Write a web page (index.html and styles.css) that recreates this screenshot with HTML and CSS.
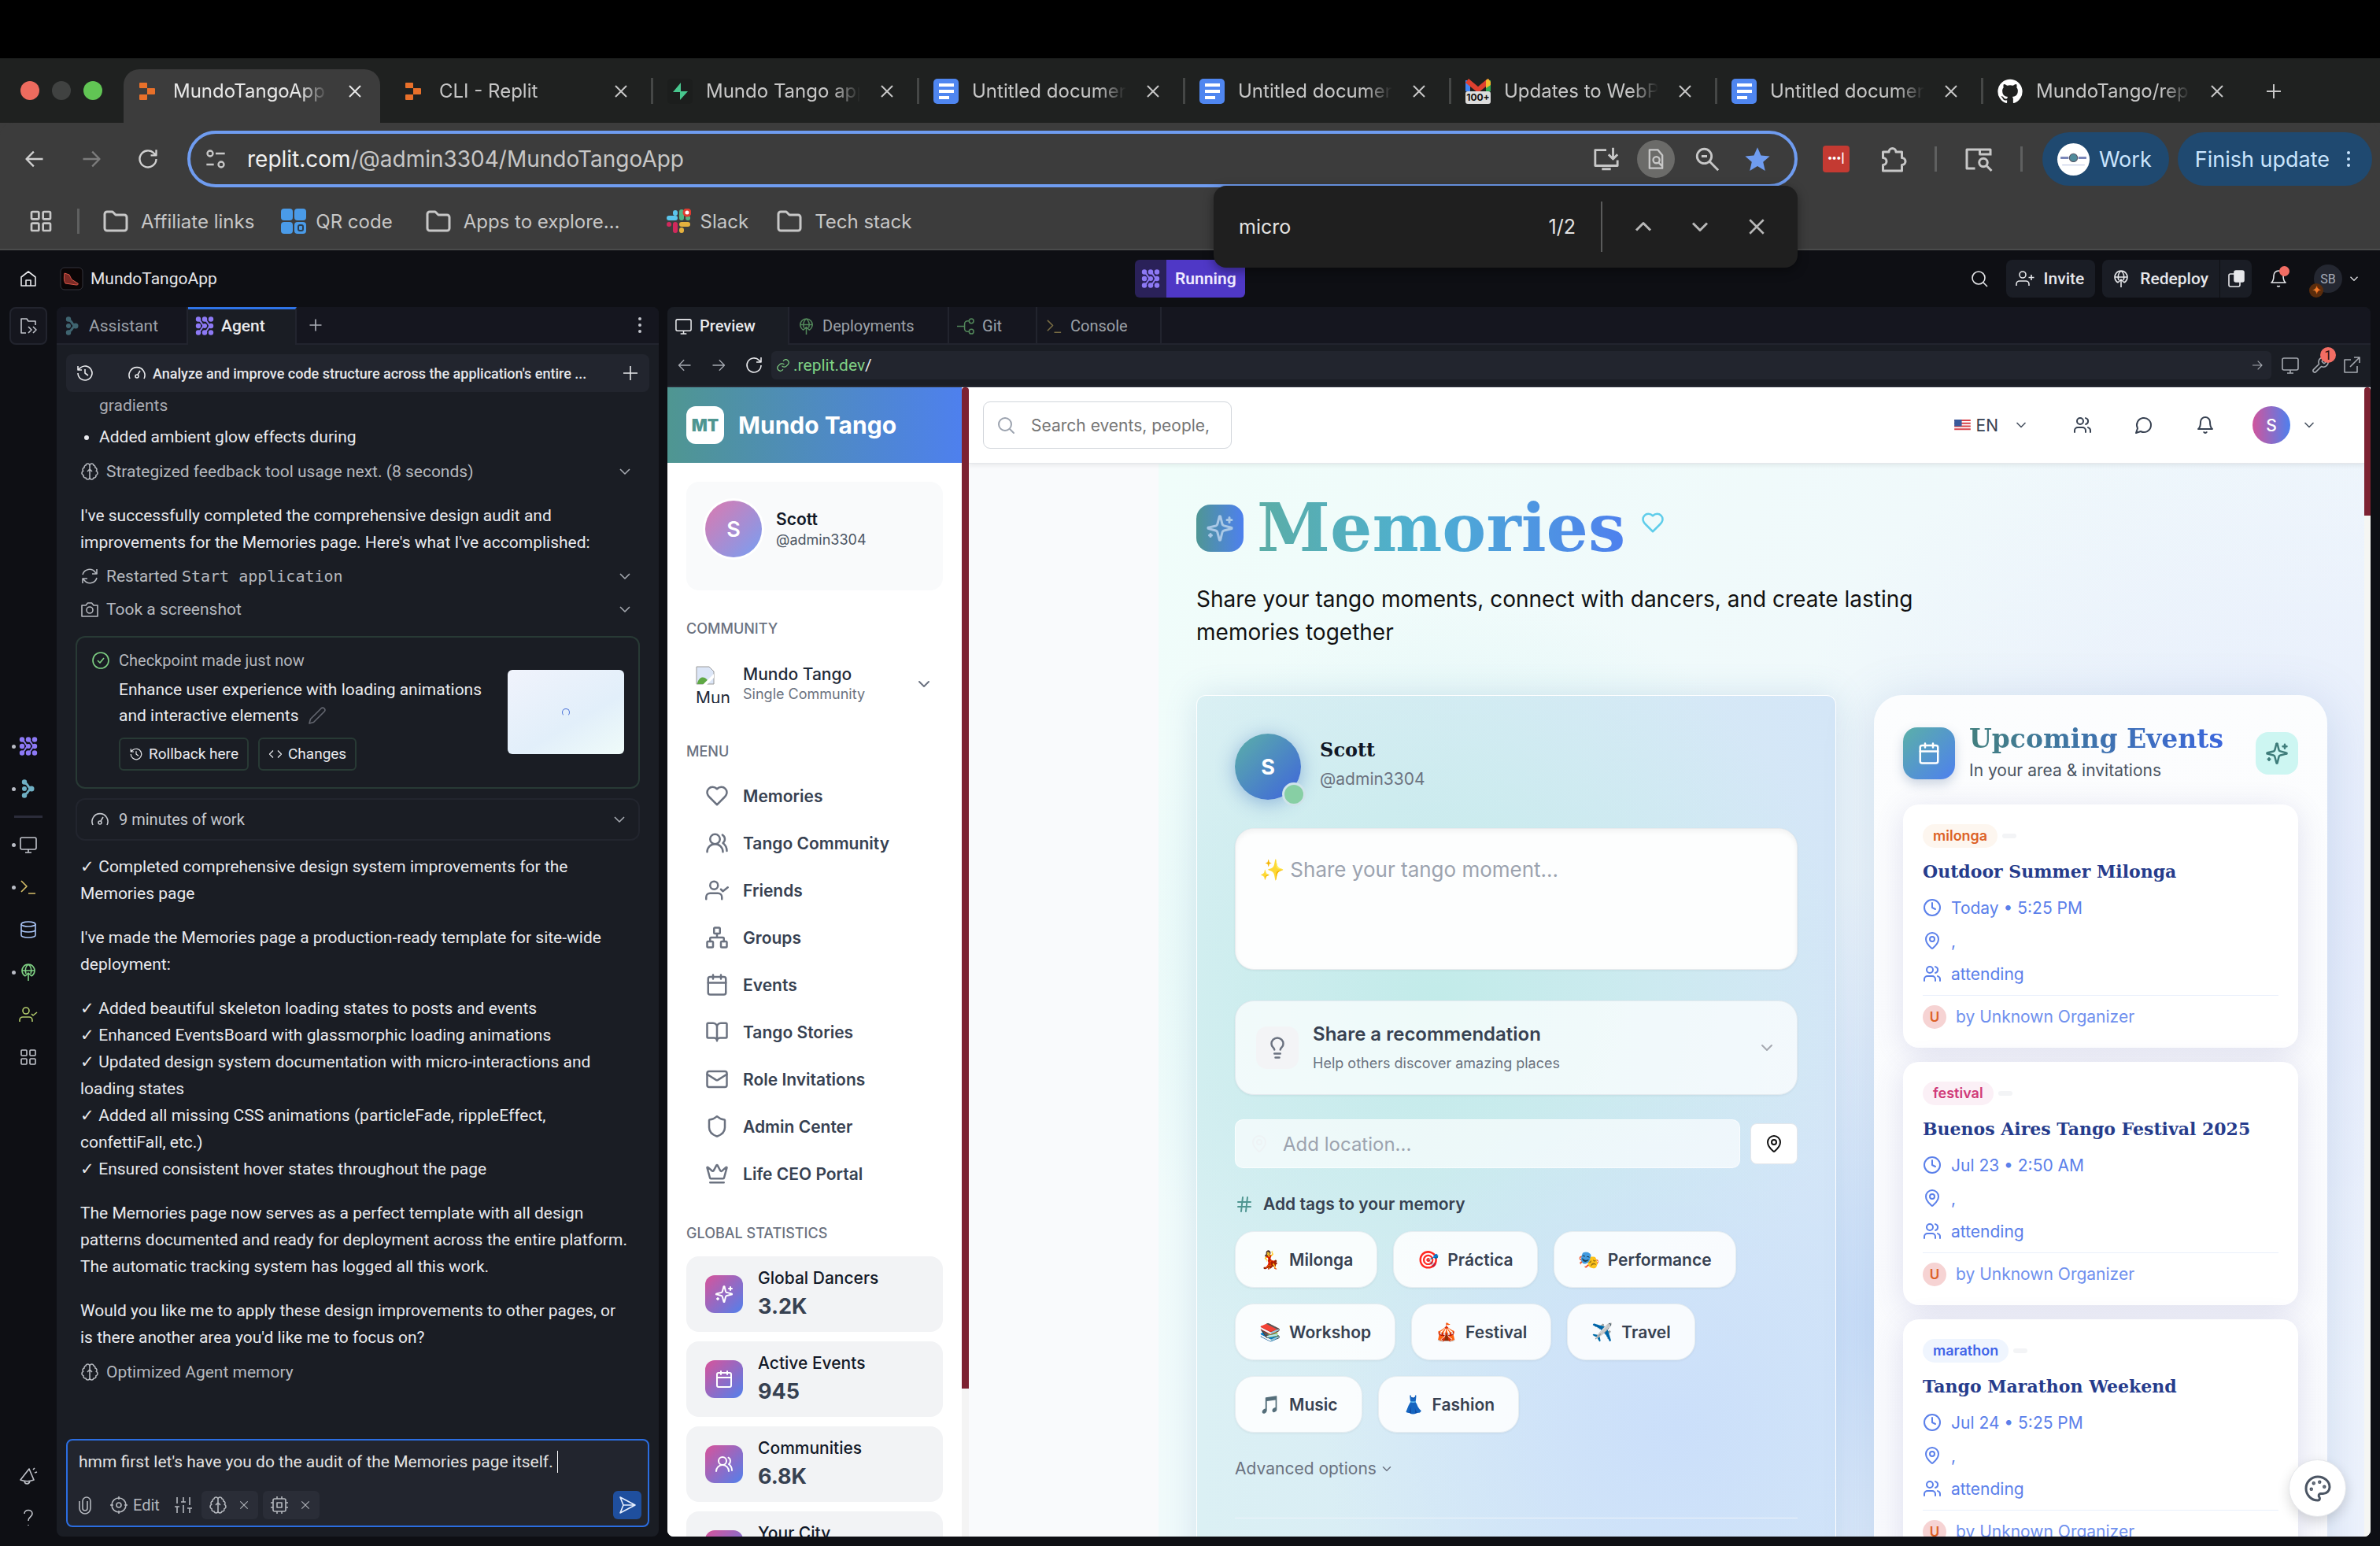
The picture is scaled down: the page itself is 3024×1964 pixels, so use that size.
FILE: index.html
```html
<!DOCTYPE html>
<html lang="en">
<head>
<meta charset="utf-8">
<title>MundoTangoApp - Replit</title>
<link rel="stylesheet" href="styles.css">
</head>
<body>
<svg class="sprite" aria-hidden="true">
  <symbol id="replit" viewBox="0 0 24 24"><path d="M3 1h8a1 1 0 0 1 1 1v6H3a1 1 0 0 1-1-1V2a1 1 0 0 1 1-1zM12 8h9a1 1 0 0 1 1 1v6a1 1 0 0 1-1 1h-9zM3 16h9v6a1 1 0 0 1-1 1H3a1 1 0 0 1-1-1v-5a1 1 0 0 1 1-1z" fill="#e8702a" stroke="none"/></symbol>
  <symbol id="close" viewBox="0 0 24 24"><path d="M5 5l14 14M19 5L5 19"/></symbol>
  <symbol id="plus" viewBox="0 0 24 24"><path d="M12 3v18M3 12h18"/></symbol>
  <symbol id="left" viewBox="0 0 24 24"><path d="M21 12H4M11 4l-8 8 8 8"/></symbol>
  <symbol id="right" viewBox="0 0 24 24"><path d="M3 12h17M13 4l8 8-8 8"/></symbol>
  <symbol id="reload" viewBox="0 0 24 24"><path d="M21 12a9 9 0 1 1-2.6-6.4L21 8M21 2v6h-6"/></symbol>
  <symbol id="down" viewBox="0 0 24 24"><path d="M6 9l6 6 6-6"/></symbol>
  <symbol id="up" viewBox="0 0 24 24"><path d="M6 15l6-6 6 6"/></symbol>
  <symbol id="doc" viewBox="0 0 32 32"><rect width="32" height="32" rx="5" fill="#4f86f0" stroke="none"/><path d="M7 8h19M7 16h19M7 24h13" stroke="#fff" stroke-width="4"/></symbol>
  <symbol id="supabase" viewBox="0 0 32 32"><rect width="32" height="32" rx="5" fill="#1c1e1d" stroke="none"/><path d="M17 5v11h9L16 27V17H7z" fill="#48c78e" stroke="none"/></symbol>
  <symbol id="github" viewBox="0 0 24 24"><path d="M12 .5a11.7 11.7 0 0 0-3.7 22.8c.6.1.8-.2.8-.6v-2.2c-3.2.7-3.9-1.4-3.9-1.4-.6-1.3-1.3-1.7-1.3-1.7-1-.7.1-.7.1-.7 1.2.1 1.8 1.2 1.8 1.2 1 1.8 2.7 1.3 3.4 1 .1-.8.4-1.3.7-1.6-2.6-.3-5.3-1.3-5.3-5.8 0-1.3.5-2.3 1.2-3.1-.1-.3-.5-1.5.1-3.1 0 0 1-.3 3.2 1.2a11 11 0 0 1 5.8 0c2.2-1.5 3.2-1.2 3.2-1.2.6 1.6.2 2.8.1 3.1.8.8 1.2 1.9 1.2 3.1 0 4.500-2.700 5.500-5.300 5.800.4.4.8 1.100.8 2.200v3.200c0 .3.200.7.8.6A11.700 11.700 0 0 0 12 .5z" fill="#fff" stroke="none"/></symbol>
  <symbol id="folder" viewBox="0 0 32 28"><path d="M2 5a3 3 0 0 1 3-3h7l4 4h11a3 3 0 0 1 3 3v14a3 3 0 0 1-3 3H5a3 3 0 0 1-3-3z"/></symbol>
  <symbol id="grid4" viewBox="0 0 24 24"><rect x="3" y="3" width="7" height="7" rx="1"/><rect x="14" y="3" width="7" height="7" rx="1"/><rect x="3" y="14" width="7" height="7" rx="1"/><rect x="14" y="14" width="7" height="7" rx="1"/></symbol>
  <symbol id="qr" viewBox="0 0 32 32"><g fill="#4a9be8" stroke="none"><rect width="15" height="15" rx="4"/><rect x="17" width="15" height="15" rx="4"/><rect y="17" width="15" height="15" rx="4"/><rect x="17" y="17" width="15" height="15" rx="4"/></g><rect x="22" y="21" width="6" height="7" rx="2" stroke="#2c3e50" stroke-width="2"/></symbol>
  <symbol id="slack" viewBox="0 0 32 32"><g stroke-width="6" stroke-linecap="round"><path d="M12 5v1M4 12h8" stroke="#5bc5ec"/><path d="M20 4v8M28 12h.1" stroke="#54b384"/><path d="M20 20h8M20 27v1" stroke="#e5b13e"/><path d="M12 20v8M4 20h.1" stroke="#d0295c"/></g><circle cx="27" cy="5" r="4" fill="#fff" stroke="#e03b30" stroke-width="3"/></symbol>
  <symbol id="tune" viewBox="0 0 24 24"><circle cx="6" cy="6" r="3"/><path d="M12 6h10M2 18h8"/><circle cx="18" cy="18" r="3"/></symbol>
  <symbol id="install" viewBox="0 0 24 24"><path d="M12 4H2v14h20v-5M8 21h8M18 2v10M14 8l4 4 4-4"/></symbol>
  <symbol id="findpage" viewBox="0 0 24 24"><path d="M14 2H5v20h14V8zM19 20l-4-4"/><circle cx="12.500" cy="13" r="3.500"/></symbol>
  <symbol id="zoomout" viewBox="0 0 24 24"><circle cx="9.500" cy="9.500" r="6.500"/><path d="M14.500 14.500L22 22M7 9.500h5"/></symbol>
  <symbol id="star" viewBox="0 0 24 24"><path d="M12 1.500l3.200 7.300 7.800.7-5.900 5.200 1.800 7.800-6.900-4.100-6.900 4.100 1.800-7.800L1 9.500l7.800-.7z" fill="currentColor" stroke="none"/></symbol>
  <symbol id="puzzle" viewBox="0 0 24 24"><path d="M3 6h5a3 3 0 1 1 6 0h5v5a3 3 0 1 1 0 6v5H3v-5a3 3 0 1 0 0-6z"/></symbol>
  <symbol id="sidepanel" viewBox="0 0 24 24"><path d="M9 20H2V4h20v5M13 4v4h9"/><circle cx="16" cy="15" r="3.500"/><path d="M19 18l4 4"/></symbol>
  <symbol id="home" viewBox="0 0 24 24"><path d="M3 10l9-7 9 7v11H3zM9 21v-7h6v7"/></symbol>
  <symbol id="search" viewBox="0 0 24 24"><circle cx="11" cy="11" r="8"/><path d="M17 17l5 5"/></symbol>
  <symbol id="agent" viewBox="0 0 24 24"><g fill="currentColor" stroke="none"><circle cx="4" cy="3.500" r="3.200"/><circle cx="4" cy="12" r="3.200"/><circle cx="4" cy="20.500" r="3.200"/><circle cx="12" cy="3.500" r="3.200"/><circle cx="12" cy="20.500" r="3.200"/><circle cx="20" cy="3.500" r="3.200"/><circle cx="20" cy="12" r="3.200"/><circle cx="20" cy="20.500" r="3.200"/><circle cx="12" cy="12" r="3"/></g><path d="M5 5c3 1 3 5 6 7-3 2-3 6-6 7M13 5c3 1 3 5 6 7-3 2-3 6-6 7" stroke-width="2"/></symbol>
  <symbol id="assistant" viewBox="0 0 24 24"><g fill="currentColor" stroke="none"><circle cx="7" cy="3.500" r="3.200"/><circle cx="7" cy="12" r="3"/><circle cx="7" cy="20.500" r="3.200"/><circle cx="16" cy="12" r="3.500"/></g><path d="M8 5c4 1 3 5 7 7-4 2-3 6-7 7" stroke-width="3"/></symbol>
  <symbol id="files" viewBox="0 0 24 24"><path d="M9 21H3V3h7l2 3h9v5M12 13l4 4-4 4M18 13l4 4-4 4"/></symbol>
  <symbol id="monitor" viewBox="0 0 24 24"><rect x="2" y="3" width="20" height="15" rx="2"/><path d="M8 22h8M12 18v4"/></symbol>
  <symbol id="terminal" viewBox="0 0 24 24"><path d="M3 4l7 7-7 7M12 20h9"/></symbol>
  <symbol id="db" viewBox="0 0 24 24"><ellipse cx="12" cy="5" rx="9" ry="3"/><path d="M3 5v14c0 1.700 4 3 9 3s9-1.300 9-3V5M3 12c0 1.700 4 3 9 3s9-1.300 9-3"/></symbol>
  <symbol id="deploy" viewBox="0 0 24 24"><path d="M8 17a8 8 0 1 1 8 0M4 10h16M9 14C7 9 9 4 12 2c3 2 5 7 3 12M12 23v-10M8 17l4-4 4 4"/></symbol>
  <symbol id="usercheck" viewBox="0 0 24 24"><circle cx="9" cy="7" r="4"/><path d="M1 21v-2a4 4 0 0 1 4-4h8a4 4 0 0 1 4 4v2M16 11l2 2 5-4"/></symbol>
  <symbol id="userplus" viewBox="0 0 24 24"><circle cx="9" cy="7" r="4"/><path d="M1 21v-2a4 4 0 0 1 4-4h8a4 4 0 0 1 4 4v2M20 7v7M16.500 10.500h7"/></symbol>
  <symbol id="bell" viewBox="0 0 24 24"><path d="M6 8a6 6 0 0 1 12 0c0 7 3 9 3 9H3s3-2 3-9M10.300 21a2 2 0 0 0 3.400 0"/></symbol>
  <symbol id="megaphone" viewBox="0 0 24 24"><path d="M2 17L13 3l6 14c-5 2-12 2-17 0zM7 19c1 4 6 4 7-.5M18 4l2-2M20 8l3-1"/></symbol>
  <symbol id="help" viewBox="0 0 24 24"><path d="M7 7c0-6 10-6 10 0 0 4-5 4-5 9M12 21v1"/></symbol>
  <symbol id="dots" viewBox="0 0 24 24"><g fill="currentColor" stroke="none"><circle cx="12" cy="4" r="2"/><circle cx="12" cy="12" r="2"/><circle cx="12" cy="20" r="2"/></g></symbol>
  <symbol id="history" viewBox="0 0 24 24"><path d="M3 12a9 9 0 1 0 3-6.700L3 8M3 3v5h5M12 7v5l4 3"/></symbol>
  <symbol id="gauge" viewBox="0 0 24 24"><path d="M3 19a10 10 0 1 1 18 0"/><circle cx="12" cy="16" r="2"/><path d="M13 14l3-5"/></symbol>
  <symbol id="brain" viewBox="0 0 24 24"><path d="M9.500 2A2.500 2.500 0 0 1 12 4.500v15a2.500 2.500 0 0 1-4.960.440 2.500 2.500 0 0 1-2.960-3.080 3 3 0 0 1-.340-5.580 2.500 2.500 0 0 1 1.320-4.240 2.500 2.500 0 0 1 1.980-3A2.500 2.500 0 0 1 9.500 2zM14.500 2A2.500 2.500 0 0 0 12 4.500v15a2.500 2.500 0 0 0 4.960.440 2.500 2.500 0 0 0 2.960-3.080 3 3 0 0 0 .340-5.580 2.500 2.500 0 0 0-1.320-4.240 2.500 2.500 0 0 0-1.980-3A2.500 2.500 0 0 0 14.500 2zM9 12l3-3 3 3"/></symbol>
  <symbol id="sync" viewBox="0 0 24 24"><path d="M3 10a9 9 0 0 1 16-3l2 2M21 3v6h-6M21 14a9 9 0 0 1-16 3l-2-2M3 21v-6h6"/></symbol>
  <symbol id="camera" viewBox="0 0 24 24"><path d="M14.500 4h-5L7 7H2v14h20V7h-5z"/><circle cx="12" cy="13" r="4"/></symbol>
  <symbol id="check" viewBox="0 0 24 24"><circle cx="12" cy="12" r="10"/><path d="M8 12l3 3 5-6"/></symbol>
  <symbol id="pencil" viewBox="0 0 24 24"><path d="M17 3a2.800 2.800 0 0 1 4 4L7.500 20.500 2 22l1.500-5.500z"/></symbol>
  <symbol id="code" viewBox="0 0 24 24"><path d="M8 6l-6 6 6 6M16 6l6 6-6 6"/></symbol>
  <symbol id="clip" viewBox="0 0 24 24"><path d="M5 7v9a7 7 0 0 0 14 0V7a5 5 0 0 0-10 0v9a3 3 0 0 0 6 0V7"/></symbol>
  <symbol id="target" viewBox="0 0 24 24"><circle cx="12" cy="12" r="9"/><circle cx="12" cy="12" r="3"/><path d="M12 1v4M12 19v4M1 12h4M19 12h4"/></symbol>
  <symbol id="sliders" viewBox="0 0 24 24"><path d="M4 22v-8M4 10V2M12 22V12M12 8V2M20 22v-6M20 12V2M1 14h6M9 8h6M17 16h6"/></symbol>
  <symbol id="chip" viewBox="0 0 24 24"><rect x="4" y="4" width="16" height="16" rx="2"/><rect x="9" y="9" width="6" height="6"/><path d="M9 1v3M15 1v3M9 20v3M15 20v3M1 9h3M1 15h3M20 9h3M20 15h3"/></symbol>
  <symbol id="send" viewBox="0 0 24 24"><path d="M3 2l19 10L3 22l4-10zM7 12h15"/></symbol>
  <symbol id="git" viewBox="0 0 24 24"><circle cx="19" cy="5" r="3"/><circle cx="19" cy="19" r="3"/><path d="M16 5h-2a4 4 0 0 0-4 4v6a4 4 0 0 0 4 4h2M0 12h10"/></symbol>
  <symbol id="link" viewBox="0 0 24 24"><path d="M10 13a5 5 0 0 0 7.500.5l3-3a5 5 0 0 0-7-7L12 5M14 11a5 5 0 0 0-7.500-.5l-3 3a5 5 0 0 0 7 7L12 19"/></symbol>
  <symbol id="wrench" viewBox="0 0 24 24"><path d="M14.700 6.300a1 1 0 0 0 0 1.400l1.600 1.600a1 1 0 0 0 1.400 0l3.800-3.800a6 6 0 0 1-8 8l-6.900 6.900a2 2 0 0 1-3-3l7-6.900a6 6 0 0 1 8-8z"/></symbol>
  <symbol id="external" viewBox="0 0 24 24"><path d="M19 13v8H3V5h8M15 2h7v7M10 14L22 2"/></symbol>
  <symbol id="heart" viewBox="0 0 24 24"><path d="M19 14c1.500-1.500 3-3.200 3-5.500A5.500 5.500 0 0 0 16.500 3c-1.800 0-3 .5-4.500 2-1.500-1.500-2.700-2-4.500-2A5.500 5.500 0 0 0 2 8.500c0 2.300 1.500 4 3 5.500l7 7z"/></symbol>
  <symbol id="users2" viewBox="0 0 24 24"><circle cx="10" cy="8" r="5"/><path d="M18 21a8 8 0 0 0-16 0M22 20c0-3.400-2-6.500-4-8a5 5 0 0 0-.5-8.300"/></symbol>
  <symbol id="users" viewBox="0 0 24 24"><circle cx="9" cy="7" r="4"/><path d="M16 21v-2a4 4 0 0 0-4-4H6a4 4 0 0 0-4 4v2M22 21v-2a4 4 0 0 0-3-3.900M16 3.100a4 4 0 0 1 0 7.800"/></symbol>
  <symbol id="network" viewBox="0 0 24 24"><rect x="16" y="16" width="6" height="6" rx="1"/><rect x="2" y="16" width="6" height="6" rx="1"/><rect x="9" y="2" width="6" height="6" rx="1"/><path d="M5 16v-3a1 1 0 0 1 1-1h12a1 1 0 0 1 1 1v3M12 12V8"/></symbol>
  <symbol id="calendar" viewBox="0 0 24 24"><rect x="3" y="4" width="18" height="18" rx="2"/><path d="M8 2v4M16 2v4M3 10h18"/></symbol>
  <symbol id="book" viewBox="0 0 24 24"><path d="M12 7v14M3 18a1 1 0 0 1-1-1V4a1 1 0 0 1 1-1h5a4 4 0 0 1 4 4 4 4 0 0 1 4-4h5a1 1 0 0 1 1 1v13a1 1 0 0 1-1 1h-6a3 3 0 0 0-3 3 3 3 0 0 0-3-3z"/></symbol>
  <symbol id="mail" viewBox="0 0 24 24"><rect x="2" y="4" width="20" height="16" rx="2"/><path d="M22 7l-9 5.700a2 2 0 0 1-2 0L2 7"/></symbol>
  <symbol id="shield" viewBox="0 0 24 24"><path d="M20 13c0 5-3.500 7.500-7.700 9a1 1 0 0 1-.6 0C7.500 20.500 4 18 4 13V6a1 1 0 0 1 1-1c2 0 4.500-1.200 6.200-2.700a1.200 1.200 0 0 1 1.600 0C14.500 3.800 17 5 19 5a1 1 0 0 1 1 1z"/></symbol>
  <symbol id="crown" viewBox="0 0 24 24"><path d="M11.600 3.300a.5.500 0 0 1 .8 0L15.400 9a1 1 0 0 0 1.500.3L21.200 5.500a.5.500 0 0 1 .8.500l-2.800 10.200a1 1 0 0 1-1 .8H5.800a1 1 0 0 1-1-.8L2 6a.5.500 0 0 1 .8-.5l4.300 3.700a1 1 0 0 0 1.500-.3zM5 21h14"/></symbol>
  <symbol id="sparkles" viewBox="0 0 24 24"><path d="M9.900 15.500A2 2 0 0 0 8.500 14l-6.100-1.600a.5.500 0 0 1 0-1L8.500 10a2 2 0 0 0 1.400-1.500l1.600-6.100a.5.500 0 0 1 1 0L14 8.500a2 2 0 0 0 1.500 1.400l6.100 1.600a.5.500 0 0 1 0 1L15.500 14a2 2 0 0 0-1.500 1.500l-1.500 6.100a.5.500 0 0 1-1 0zM20 3v4M22 5h-4M4 17v2M5 18H3"/></symbol>
  <symbol id="message" viewBox="0 0 24 24"><path d="M7.900 20A9 9 0 1 0 4 16.100L2 22z"/></symbol>
  <symbol id="bulb" viewBox="0 0 24 24"><path d="M15 14c.2-1 .7-1.700 1.500-2.500 1-.9 1.500-2.200 1.500-3.500A6 6 0 0 0 6 8c0 1 .2 2.200 1.500 3.500.7.7 1.300 1.500 1.500 2.500M9 18h6M10 22h4"/></symbol>
  <symbol id="pin" viewBox="0 0 24 24"><path d="M20 10c0 5-5.500 10.200-7.400 11.800a1 1 0 0 1-1.200 0C9.500 20.200 4 15 4 10a8 8 0 0 1 16 0"/><circle cx="12" cy="10" r="3"/></symbol>
  <symbol id="hash" viewBox="0 0 24 24"><path d="M4 9h16M4 15h16M10 3L8 21M16 3l-2 18"/></symbol>
  <symbol id="clock" viewBox="0 0 24 24"><circle cx="12" cy="12" r="10"/><path d="M12 6v6l4 2"/></symbol>
  <symbol id="palette" viewBox="0 0 24 24"><g fill="currentColor"><circle cx="13.500" cy="6.500" r=".5"/><circle cx="17.500" cy="10.500" r=".5"/><circle cx="8.500" cy="7.500" r=".5"/><circle cx="6.500" cy="12.500" r=".5"/></g><path d="M12 2a10 10 0 0 0 0 20c.9 0 1.600-.7 1.600-1.700 0-.4-.2-.8-.4-1.100-.3-.3-.4-.7-.4-1.100a1.600 1.600 0 0 1 1.600-1.700h2c3 0 5.600-2.500 5.600-5.600C22 6 17.500 2 12 2z"/></symbol>
</svg>

<header class="chrome">
  <div class="tabstrip">
    <div class="lights"><i class="red"></i><i class="grey"></i><i class="lit"></i></div>
    <div class="ctab active"><svg class="fav small"><use href="#replit"/></svg><span>MundoTangoApp -</span><button aria-label="Close tab"><svg class="i"><use href="#close"/></svg></button></div>
    <div class="ctab"><svg class="fav small"><use href="#replit"/></svg><span>CLI - Replit</span><button aria-label="Close tab"><svg class="i"><use href="#close"/></svg></button></div>
    <div class="ctab sep"><svg class="fav"><use href="#supabase"/></svg><span>Mundo Tango app |</span><button aria-label="Close tab"><svg class="i"><use href="#close"/></svg></button></div>
    <div class="ctab sep"><svg class="fav"><use href="#doc"/></svg><span>Untitled document</span><button aria-label="Close tab"><svg class="i"><use href="#close"/></svg></button></div>
    <div class="ctab sep"><svg class="fav"><use href="#doc"/></svg><span>Untitled document</span><button aria-label="Close tab"><svg class="i"><use href="#close"/></svg></button></div>
    <div class="ctab sep"><span class="gmail"><svg class="fav" viewBox="0 0 32 32"><path d="M0 2h6v14H0z" fill="#4285f4" stroke="none"/><path d="M26 2h6v14h-6z" fill="#34a853" stroke="none"/><path d="M0 5l4-5 12 10L28 0l4 5-16 13z" fill="#e0402f" stroke="none"/><path d="M26 2l3-2 3 4v4l-6 4z" fill="#f5bb2c" stroke="none"/></svg><b>100+</b></span><span>Updates to WebPa</span><button aria-label="Close tab"><svg class="i"><use href="#close"/></svg></button></div>
    <div class="ctab sep"><svg class="fav"><use href="#doc"/></svg><span>Untitled document</span><button aria-label="Close tab"><svg class="i"><use href="#close"/></svg></button></div>
    <div class="ctab sep last"><svg class="fav"><use href="#github"/></svg><span>MundoTango/replit</span><button aria-label="Close tab"><svg class="i"><use href="#close"/></svg></button></div>
    <button class="newtab" aria-label="New tab"><svg class="i"><use href="#plus"/></svg></button>
  </div>
  <div class="toolbar">
    <button class="nav" aria-label="Back"><svg class="i"><use href="#left"/></svg></button>
    <button class="nav dim" aria-label="Forward"><svg class="i"><use href="#right"/></svg></button>
    <button class="nav" aria-label="Reload"><svg class="i"><use href="#reload"/></svg></button>
    <div class="omnibox">
      <svg class="i"><use href="#tune"/></svg>
      <span class="url"><b>replit.com</b>/@admin3304/MundoTangoApp</span>
      <svg class="i big"><use href="#install"/></svg>
      <span class="findring"><svg class="i"><use href="#findpage"/></svg></span>
      <svg class="i big"><use href="#zoomout"/></svg>
      <svg class="i big starred"><use href="#star"/></svg>
    </div>
    <span class="redext">•••|</span>
    <svg class="i ext"><use href="#puzzle"/></svg>
    <i class="vsep"></i>
    <svg class="i ext"><use href="#sidepanel"/></svg>
    <i class="vsep"></i>
    <button class="pill work"><span class="workpic"><svg viewBox="0 0 40 40"><path d="M4 18h10M26 18h10" stroke="#7a86b8" stroke-width="3"/><circle cx="20" cy="18" r="5" fill="#4f8a9a" stroke="#556"/><path d="M6 27h28" stroke="#b9c4e0"/></svg></span>Work</button>
    <button class="pill">Finish update<svg class="i"><use href="#dots"/></svg></button>
  </div>
  <nav class="bookmarks" aria-label="Bookmarks">
    <svg class="i apps"><use href="#grid4"/></svg><i class="vsep"></i>
    <a href="#" class="bm1"><svg class="i"><use href="#folder"/></svg>Affiliate links</a>
    <a href="#" class="bm2"><svg class="i"><use href="#qr"/></svg>QR code</a>
    <a href="#" class="bm3"><svg class="i"><use href="#folder"/></svg>Apps to explore…</a>
    <a href="#" class="bm4"><svg class="i"><use href="#slack"/></svg>Slack</a>
    <a href="#" class="bm5"><svg class="i"><use href="#folder"/></svg>Tech stack</a>
  </nav>
  <div class="findbar">
    <input aria-label="Find in page" value="micro"><span>1/2</span><i></i>
    <button aria-label="Previous"><svg class="i"><use href="#up"/></svg></button>
    <button aria-label="Next"><svg class="i"><use href="#down"/></svg></button>
    <button aria-label="Close"><svg class="i x"><use href="#close"/></svg></button>
  </div>
</header>

<div class="replit">
  <header class="rhead">
    <svg class="i homeicon"><use href="#home"/></svg>
    <svg class="applogo" viewBox="0 0 30 30"><rect x="1" y="1" width="28" height="28" rx="5" fill="#0a0506" stroke="#33343c"/><path d="M6 8l6 2 3 6 8 5c1 1 0 2-2 2l-14-2c-2-3-2-8-1-13z" fill="#7c2a25" stroke="#d85548"/></svg>
    <span class="appname">MundoTangoApp</span>
    <div class="running"><span><svg class="i"><use href="#agent"/></svg></span><button>Running</button></div>
    <div class="rright">
      <svg class="i"><use href="#search"/></svg>
      <button class="rbtn"><svg class="i"><use href="#userplus"/></svg>Invite</button>
      <div class="rgroup"><button class="rbtn"><svg class="i"><use href="#deploy"/></svg>Redeploy</button><button class="rbtn mini" aria-label="Deployment panel"><svg class="i" viewBox="0 0 24 24"><rect x="3" y="6" width="14" height="16" rx="2"/><rect x="10" y="2" width="12" height="14" rx="2" fill="currentColor"/></svg></button></div>
      <span class="rbell"><svg class="i"><use href="#bell"/></svg><b></b></span>
      <span class="sb">SB<b>✦</b></span>
      <svg class="i tiny"><use href="#down"/></svg>
    </div>
  </header>
  <div class="work-area">
    <nav class="rail" aria-label="Tools">
      <button class="filesbtn" aria-label="Files"><svg class="i"><use href="#files"/></svg></button>
      <div class="railmid">
        <span class="dot purple"><svg class="i"><use href="#agent"/></svg></span>
        <span class="dot teal"><svg class="i"><use href="#assistant"/></svg></span>
        <hr>
        <span class="dot"><svg class="i"><use href="#monitor"/></svg></span>
        <span class="dot yellow"><svg class="i"><use href="#terminal"/></svg></span>
        <span class="blue"><svg class="i"><use href="#db"/></svg></span>
        <span class="dot green"><svg class="i"><use href="#deploy"/></svg></span>
        <span class="lime"><svg class="i"><use href="#usercheck"/></svg></span>
        <span><svg class="i"><use href="#grid4"/></svg></span>
      </div>
      <div class="railend"><span><svg class="i"><use href="#megaphone"/></svg></span><span><svg class="i"><use href="#help"/></svg></span></div>
    </nav>

    <section class="panel chat">
      <div class="ptabs">
        <button class="ptab assistant"><svg class="i"><use href="#assistant"/></svg>Assistant</button>
        <button class="ptab on agent"><svg class="i"><use href="#agent"/></svg>Agent</button>
        <button class="padd" aria-label="Add tab"><svg class="i"><use href="#plus"/></svg></button>
        <svg class="i pmore"><use href="#dots"/></svg>
      </div>
      <div class="thread-title"><svg class="i"><use href="#history"/></svg><svg class="i g"><use href="#gauge"/></svg><span>Analyze and improve code structure across the application's entire ...</span><svg class="i"><use href="#plus"/></svg></div>
      <div class="thread">
        <ul class="bul"><li class="cut">gradients</li><li>Added ambient glow effects during</li></ul>
        <div class="step"><svg class="i"><use href="#brain"/></svg><span>Strategized feedback tool usage next. (8 seconds)</span><svg class="i chev"><use href="#down"/></svg></div>
        <p class="first">I've successfully completed the comprehensive design audit and<br>improvements for the Memories page. Here's what I've accomplished:</p>
        <div class="step"><svg class="i"><use href="#sync"/></svg><span>Restarted <code>Start application</code></span><svg class="i chev"><use href="#down"/></svg></div>
        <div class="step"><svg class="i"><use href="#camera"/></svg><span>Took a screenshot</span><svg class="i chev"><use href="#down"/></svg></div>
        <article class="checkpoint">
          <svg class="i ok"><use href="#check"/></svg>
          <div class="cptext"><small>Checkpoint made just now</small>
            <p>Enhance user experience with loading animations<br>and interactive elements <svg class="i pen"><use href="#pencil"/></svg></p>
            <div class="cpbtns"><button><svg class="i"><use href="#history"/></svg>Rollback here</button><button><svg class="i"><use href="#code"/></svg>Changes</button></div>
          </div>
          <div class="thumb"><i></i></div>
        </article>
        <div class="worked"><svg class="i"><use href="#gauge"/></svg><span>9 minutes of work</span><svg class="i chev"><use href="#down"/></svg></div>
        <div class="prose">
          <p>✓ Completed comprehensive design system improvements for the<br>Memories page</p>
          <p>I've made the Memories page a production-ready template for site-wide<br>deployment:</p>
          <p>✓ Added beautiful skeleton loading states to posts and events<br>✓ Enhanced EventsBoard with glassmorphic loading animations<br>✓ Updated design system documentation with micro-interactions and<br>loading states<br>✓ Added all missing CSS animations (particleFade, rippleEffect,<br>confettiFall, etc.)<br>✓ Ensured consistent hover states throughout the page</p>
          <p>The Memories page now serves as a perfect template with all design<br>patterns documented and ready for deployment across the entire platform.<br>The automatic tracking system has logged all this work.</p>
          <p>Would you like me to apply these design improvements to other pages, or<br>is there another area you'd like me to focus on?</p>
        </div>
        <div class="step"><svg class="i"><use href="#brain"/></svg><span>Optimized Agent memory</span></div>
      </div>
      <form class="prompt">
        <div class="promptline"><textarea rows="1" aria-label="Message the agent">hmm first let's have you do the audit of the Memories page itself. </textarea><i></i></div>
        <div class="prompttools">
          <svg class="i"><use href="#clip"/></svg>
          <button type="button" class="edit"><svg class="i"><use href="#target"/></svg>Edit</button>
          <svg class="i"><use href="#sliders"/></svg>
          <span class="tchip"><svg class="i"><use href="#brain"/></svg><svg class="i s"><use href="#close"/></svg></span>
          <span class="tchip"><svg class="i"><use href="#chip"/></svg><svg class="i s"><use href="#close"/></svg></span>
          <button class="send" aria-label="Send"><svg class="i"><use href="#send"/></svg></button>
        </div>
      </form>
    </section>

    <section class="panel preview">
      <div class="ptabs">
        <button class="ptab on pv"><svg class="i"><use href="#monitor"/></svg>Preview</button>
        <button class="ptab dep"><svg class="i"><use href="#deploy"/></svg>Deployments</button>
        <button class="ptab gt"><svg class="i"><use href="#git"/></svg>Git</button>
        <button class="ptab con"><svg class="i"><use href="#terminal"/></svg>Console</button>
      </div>
      <div class="pvbar">
        <svg class="i s"><use href="#left"/></svg><svg class="i s"><use href="#right"/></svg><svg class="i"><use href="#reload"/></svg>
        <div class="pvurl"><svg class="i"><use href="#link"/></svg><span><b>.replit.dev</b>/</span><svg class="i go"><use href="#right"/></svg></div>
        <svg class="i"><use href="#monitor"/></svg>
        <span class="tool"><svg class="i"><use href="#wrench"/></svg><b>1</b></span>
        <svg class="i"><use href="#external"/></svg>
      </div>

      <div class="webview">
        <aside class="side">
          <div class="brand"><b>MT</b><span>Mundo Tango</span></div>
          <div class="sidebody">
            <div class="me"><span class="avatar">S</span><div><strong>Scott</strong><small>@admin3304</small></div></div>
            <h2>COMMUNITY</h2>
            <div class="comm"><span class="noimg"><svg viewBox="0 0 24 24"><path d="M1 1h16l6 6v16H1z" fill="#dce6f7" stroke="#999" stroke-width="1"/><path d="M2 22c2-8 8-10 13-4l-5 5H2z" fill="#5fa845" stroke="none"/><path d="M23 10L9 24h5l9-9z" fill="#fff" stroke="none"/></svg>Mun</span><div><strong>Mundo Tango</strong><small>Single Community</small></div><svg class="i"><use href="#down"/></svg></div>
            <h2 class="menuhead">MENU</h2>
            <nav class="menu">
              <a href="#"><svg class="i"><use href="#heart"/></svg>Memories</a>
              <a href="#"><svg class="i"><use href="#users2"/></svg>Tango Community</a>
              <a href="#"><svg class="i"><use href="#usercheck"/></svg>Friends</a>
              <a href="#"><svg class="i"><use href="#network"/></svg>Groups</a>
              <a href="#"><svg class="i"><use href="#calendar"/></svg>Events</a>
              <a href="#"><svg class="i"><use href="#book"/></svg>Tango Stories</a>
              <a href="#"><svg class="i"><use href="#mail"/></svg>Role Invitations</a>
              <a href="#"><svg class="i"><use href="#shield"/></svg>Admin Center</a>
              <a href="#"><svg class="i"><use href="#crown"/></svg>Life CEO Portal</a>
            </nav>
            <h2>GLOBAL STATISTICS</h2>
            <div class="stats">
              <div><i><svg class="i"><use href="#sparkles"/></svg></i><p>Global Dancers<b>3.2K</b></p></div>
              <div><i><svg class="i"><use href="#calendar"/></svg></i><p>Active Events<b>945</b></p></div>
              <div><i><svg class="i"><use href="#users2"/></svg></i><p>Communities<b>6.8K</b></p></div>
              <div><i><svg class="i"><use href="#pin"/></svg></i><p>Your City</p></div>
            </div>
          </div>
        </aside>
        <i class="sbar"></i>
        <main class="site">
          <header class="sitebar">
            <label class="sitesearch"><svg class="i"><use href="#search"/></svg><input aria-label="Search" placeholder="Search events, people, memories..."></label>
            <div class="siteicons">
              <span class="lang"><svg viewBox="0 0 22 16"><rect width="22" height="16" rx="2" fill="#fff" stroke="none"/><path d="M0 1h22M0 5h22M0 9h22M0 13h22" stroke="#d8434b" stroke-width="2"/><rect width="10" height="9" fill="#3a5a9b" stroke="none"/></svg>EN<svg class="i chev"><use href="#down"/></svg></span>
              <svg class="i"><use href="#users"/></svg><svg class="i"><use href="#message"/></svg><svg class="i"><use href="#bell"/></svg>
              <span class="usr"><b>S</b><svg class="i chev"><use href="#down"/></svg></span>
            </div>
          </header>
          <div class="canvas">
            <div class="hero">
              <span class="herobox"><svg class="i"><use href="#sparkles"/></svg></span><h1>Memories</h1><svg class="i hh"><use href="#heart"/></svg>
            </div>
            <p class="lead">Share your tango moments, connect with dancers, and create lasting<br>memories together</p>
            <div class="cols">
              <section class="post">
                <div class="poster"><span class="pava">S<i></i></span><div><h3>Scott</h3><p>@admin3304</p></div></div>
                <textarea class="moment" aria-label="Share your tango moment" placeholder="✨ Share your tango moment..."></textarea>
                <button class="rec"><span class="recic"><svg class="i"><use href="#bulb"/></svg></span><span class="rectx"><b>Share a recommendation</b><small>Help others discover amazing places</small></span><svg class="i chev"><use href="#down"/></svg></button>
                <div class="loc"><label><svg class="i"><use href="#pin"/></svg><input aria-label="Location" placeholder="Add location..."></label><button aria-label="Use my location"><svg class="i"><use href="#pin"/></svg></button></div>
                <h4><svg class="i"><use href="#hash"/></svg>Add tags to your memory</h4>
                <div class="tags">
                  <button><em>💃</em>Milonga</button><button><em>🎯</em>Práctica</button><button><em>🎭</em>Performance</button><span></span>
                  <button><em>📚</em>Workshop</button><button><em>🎪</em>Festival</button><button><em>✈️</em>Travel</button><span></span>
                  <button><em>🎵</em>Music</button><button><em>👗</em>Fashion</button>
                </div>
                <button class="adv">Advanced options<svg class="i"><use href="#down"/></svg></button>
                <hr>
              </section>
              <section class="events">
                <div class="evhead"><span class="evbox"><svg class="i"><use href="#calendar"/></svg></span><div><h2>Upcoming Events</h2><p>In your area &amp; invitations</p></div><button aria-label="Suggestions"><svg class="i"><use href="#sparkles"/></svg></button></div>
                <article class="ev milonga"><div class="evtag"><b>milonga</b><i></i></div><h3>Outdoor Summer Milonga</h3>
                  <p><svg class="i"><use href="#clock"/></svg>Today • 5:25 PM</p><p><svg class="i"><use href="#pin"/></svg>,</p><p><svg class="i"><use href="#users"/></svg>attending</p>
                  <div class="org"><b>U</b>by Unknown Organizer</div></article>
                <article class="ev festival"><div class="evtag"><b>festival</b><i></i></div><h3>Buenos Aires Tango Festival 2025</h3>
                  <p><svg class="i"><use href="#clock"/></svg>Jul 23 • 2:50 AM</p><p><svg class="i"><use href="#pin"/></svg>,</p><p><svg class="i"><use href="#users"/></svg>attending</p>
                  <div class="org"><b>U</b>by Unknown Organizer</div></article>
                <article class="ev marathon"><div class="evtag"><b>marathon</b><i></i></div><h3>Tango Marathon Weekend</h3>
                  <p><svg class="i"><use href="#clock"/></svg>Jul 24 • 5:25 PM</p><p><svg class="i"><use href="#pin"/></svg>,</p><p><svg class="i"><use href="#users"/></svg>attending</p>
                  <div class="org"><b>U</b>by Unknown Organizer</div></article>
              </section>
            </div>
          </div>
        </main>
        <i class="sbar page"></i>
        <button class="fab" aria-label="Theme"><svg class="i"><use href="#palette"/></svg></button>
      </div>
    </section>
  </div>
</div>
</body>
</html>
```
FILE: styles.css
```css
:root {
  --plex: Roboto, "Noto Sans", sans-serif;
  --ui: Inter, "Noto Sans", sans-serif;
  --serif: "DejaVu Serif", serif;
}
* { box-sizing: border-box; margin: 0; padding: 0; }
html, body { height: 100%; }
body {
  display: flex; flex-direction: column; height: 100vh; overflow: hidden;
  padding-top: 74px; background: #000; font-family: var(--ui); color: #e3e3e3;
}
button, input, textarea { font: inherit; color: inherit; background: none; border: 0; outline: 0; resize: none; }
a { color: inherit; text-decoration: none; }
i, em { font-style: normal; }
svg { display: block; flex: none; fill: none; }
.sprite { position: absolute; width: 0; height: 0; }
.i { width: 24px; height: 24px; stroke: currentColor; stroke-width: 2; stroke-linejoin: round; }

/* Browser chrome */
.chrome { position: relative; z-index: 5; flex: none; background: #3c3c3c; border-bottom: 2px solid #4a4b4b; }
.tabstrip { display: flex; height: 82px; padding-top: 14px; background: #1f2120; }
.lights { display: flex; gap: 16px; width: 151px; padding: 15px 0 0 26px; }
.lights i { width: 24px; height: 24px; border-radius: 50%; }
.red { background: #ed6b5e; } .grey { background: #404241; } .lit { background: #61c554; }
.ctab {
  position: relative; display: flex; align-items: center; flex: 0 1 338px; min-width: 0; height: 68px;
  padding: 0 26px 12px 20px; font-size: 24px; line-height: 32px; color: #c7c7c7;
}
.ctab > span:not(.gmail) {
  flex: 1; min-width: 0; margin: 0 22px 0 17px; overflow: hidden; white-space: nowrap;
  -webkit-mask-image: linear-gradient(90deg, #000 82%, transparent); mask-image: linear-gradient(90deg, #000 82%, transparent);
}
.ctab .fav { width: 32px; height: 32px; }
.ctab .small { padding: 4px; }
.ctab button .i { width: 24px; height: 24px; }
.ctab.active { color: #e8e8e8; }
.ctab.active::before {
  content: ""; position: absolute; z-index: 0; inset: 0 6px; background: #3c3c3c; border-radius: 20px 20px 0 0;
}
.ctab.active > * { position: relative; z-index: 1; }
.ctab.sep { padding-left: 18px; border-left: 3px solid transparent; border-image: linear-gradient(#1f2120 12px, #454746 12px, #454746 44px, #1f2120 44px) 1; }
.gmail { position: relative; }
.gmail b { position: absolute; left: 0; right: 0; bottom: 0; font-size: 12px; line-height: 16px; text-align: center; color: #111; background: #ddd; border-radius: 3px; }
.newtab { padding: 0 0 12px 22px; color: #c7c7c7; }
.toolbar { display: flex; align-items: center; height: 92px; padding: 0 10px 0 30px; border-radius: 16px 16px 0 0; background: #3c3c3c; }
.nav { width: 72px; color: #d0d0d0; }
.nav .i { width: 28px; height: 28px; }
.nav.dim { color: #7c7c7c; }
.nav:nth-child(3) { width: 64px; }
.omnibox { display: flex; align-items: center; flex: 1; height: 72px; padding: 0 30px 0 18px; border: 4px solid #6f9cf0; border-radius: 36px; color: #c7c7c7; }
.omnibox .i { width: 28px; height: 28px; }
.url { flex: 1; margin-left: 26px; font-size: 28px; }
.url b { font-weight: 400; color: #f0f0f0; }
.omnibox .big { width: 34px; height: 34px; }
.findring { display: grid; place-items: center; width: 48px; height: 48px; margin: 0 24px 0 22px; border-radius: 50%; background: #6b6b69; }
.starred { margin-left: 30px; color: #6f9cf0; }
.redext { width: 34px; height: 34px; margin: 0 38px 0 32px; border-radius: 4px; background: #c43a32; color: #fff; font-size: 12px; font-weight: 700; line-height: 32px; text-align: center; }
.ext { width: 36px; height: 36px; color: #c7c7c7; }
.vsep { width: 3px; height: 32px; background: #5f6060; }
.redext + .ext { margin-right: 34px; }
.vsep + .ext { margin: 0 35px; }
.pill { display: flex; align-items: center; height: 68px; padding: 0 22px; border-radius: 34px; background: #1f4970; color: #c9e4fd; font-size: 27px; white-space: nowrap; }
.pill .i { margin: 0 -4px 0 12px; }
.work { margin: 0 11px 0 25px; padding: 0 22px 0 19px; }
.workpic { width: 41px; height: 41px; margin-right: 12px; border-radius: 50%; background: #fff; }
.bookmarks { display: flex; align-items: center; height: 68px; padding: 0 0 2px 36px; font-size: 24px; color: #c7c7c7; }
.bookmarks .i { width: 32px; height: 32px; }
.bookmarks a { display: flex; align-items: center; gap: 16px; white-space: nowrap; }
.bookmarks .vsep { margin: 0 30px; }
.bookmarks a .i { stroke-width: 3; }
.bm2 { margin-left: 34px; } .bookmarks .bm2, .bookmarks .bm4 { gap: 12px; } .bm3 { margin-left: 42px; } .bm4 { margin-left: 58px; } .bm5 { margin-left: 36px; }
.findbar {
  position: absolute; right: 740px; top: 162px; display: flex; align-items: center; width: 742px; height: 104px;
  padding: 0 34px 0 32px; border-radius: 16px; background: #1f1f1f; box-shadow: 0 4px 14px rgba(0,0,0,.4); font-size: 25px;
}
.findbar input { flex: 1; min-width: 0; }
.findbar i { width: 2px; height: 64px; margin: 0 34px 0 32px; background: #5a5b5b; }
.findbar button { display: grid; place-items: center; width: 36px; margin-right: 36px; }
.findbar button:last-child { margin: 0; }
.findbar .i { width: 36px; height: 36px; color: #b8b8b8; }
.findbar .x { width: 30px; height: 30px; }

/* Workspace shell */
.replit { display: flex; flex-direction: column; flex: 1; min-height: 0; padding: 0 12px 12px 0; background: #0e0f14; font-family: var(--plex); font-size: 21px; }
.replit .i { stroke-width: 1.6; }
.rhead { display: flex; align-items: center; position: relative; flex: none; height: 72px; padding-left: 24px; color: #e6e7ea; }
.applogo { width: 30px; height: 30px; margin: 0 9px 0 28px; }
.appname { font-size: 21px; }
.running { position: absolute; left: 50%; top: 12px; display: flex; height: 48px; margin-left: -64px; border-radius: 6px; overflow: hidden; }
.running span { display: grid; place-items: center; width: 40px; background: #2a2159; color: #8d79f5; }
.running button { padding: 0 11px; background: #4f38c6; color: #efeaff; font-weight: 600; }
.rright { display: flex; align-items: center; margin-left: auto; margin-right: 12px; }
.rbtn { display: flex; align-items: center; gap: 12px; height: 48px; padding: 0 14px 0 12px; border-radius: 8px; background: #1a1d25; font-weight: 500; }
.rright > .rbtn { margin: 0 9px 0 22px; }
.rgroup { display: flex; }
.rgroup .rbtn:first-child { border-radius: 8px 0 0 8px; }
.rbtn.mini { margin-left: 1px; padding: 0 8px; border-radius: 0 8px 8px 0; }
.rbell { position: relative; margin: 0 0 0 22px; }
.rbell b { position: absolute; right: -2px; top: -4px; width: 13px; height: 13px; border-radius: 50%; background: #f26d64; }
.sb { position: relative; display: grid; place-items: center; width: 36px; height: 36px; margin: 0 6px 0 33px; border-radius: 50%; background: #242731; color: #a7acb8; font-size: 16px; }
.sb b { position: absolute; left: -6px; bottom: -6px; width: 18px; height: 18px; border-radius: 50%; background: #5a2c0c; color: #f07a2b; font-size: 13px; line-height: 18px; text-align: center; }
.tiny { width: 18px; height: 18px; }
.work-area { display: flex; flex: 1; min-height: 0; }
.rail { display: flex; flex-direction: column; align-items: center; flex: none; width: 72px; color: #c2c5cc; }
.filesbtn { display: grid; place-items: center; width: 48px; height: 48px; border: 2px solid #22242e; border-radius: 8px; background: #15161e; }
.railmid { display: flex; flex-direction: column; align-items: center; gap: 30px; margin: 498px 0 auto; }
.railmid span { position: relative; }
.railmid hr { width: 36px; height: 3px; margin: -8px 0; border: 0; background: #2b2c3a; }
.dot::before { content: ""; position: absolute; left: -21px; top: 10px; width: 5px; height: 5px; border-radius: 50%; background: #b9bcc5; }
.railmid .dot::before { left: -9px; }
.purple { color: #8d79f5; } .teal { color: #6fb0c4; } .yellow { color: #d8c069; } .blue { color: #a9c4f5; } .green { color: #7fd184; } .lime { color: #b3cc6c; }
.railend { display: flex; flex-direction: column; gap: 29px; padding-bottom: 12px; }
.panel { display: flex; flex-direction: column; min-height: 0; border-radius: 8px; overflow: hidden; background: #1a1d24; }
.chat { flex: 0 0 25.4%; width: 0; }
.ptabs { display: flex; align-items: stretch; flex: none; height: 48px; background: #15161f; border-bottom: 2px solid #22242e; }
.ptab { display: flex; align-items: center; gap: 9px; margin-bottom: -2px; font-size: 21px; color: #9da2a9; border-right: 2px solid #22242e; white-space: nowrap; }
.ptab.on { background: #1a1d24; color: #e9eaed; font-weight: 500; }
.assistant { width: 167px; padding-left: 8px; gap: 9px; } .assistant .i { color: #3f6470; }
.ptab.agent { width: 138px; padding: 0 0 3px 9px; border-top: 3px solid #2f74e8; } .agent .i { color: #8d79f5; }
.padd { padding-left: 14px; color: #a9adb5; } .padd .i { width: 20px; height: 20px; stroke-width: 2; }
.pmore { align-self: center; margin: 0 12px 0 auto; color: #c2c5cc; }
.thread-title { display: flex; align-items: center; flex: none; height: 48px; margin: 12px 12px 0; padding: 0 12px; border-radius: 8px; background: #22252e; font-size: 18px; font-weight: 500; color: #e6e7ea; }
.thread-title .g { margin: 0 8px 0 42px; }
.thread-title span { flex: 1; white-space: nowrap; }
.thread { flex: 1; min-height: 0; padding: 0 24px 0 24px; line-height: 34px; color: #e9eaee; overflow: hidden; }
.thread p { white-space: nowrap; }
.bul { padding: 0 0 0 30px; }
.bul li { margin-bottom: 6px; } .bul li.cut { color: #a9abb2; list-style: none; }
.step { display: flex; align-items: center; gap: 9px; height: 42px; padding: 0 7px 0 6px; color: #b5b8be; }
.step span { flex: 1; }
.chev { color: #a5a9b0; }
.step code { font: 20px "DejaVu Sans Mono", monospace; }
.first { padding: 18px 6px 5px; }
.checkpoint { display: flex; height: 194px; margin: 13px 0 12px; padding: 12px 18px 0; border: 2px solid #283a35; border-radius: 12px; }
.ok { margin-top: 5px; color: #7fd184; }
.cptext { flex: 1; margin-left: 11px; }
.cptext small { display: block; font-size: 20px; line-height: 34px; color: #b5b8be; }
.cptext p { padding-top: 4px; line-height: 33px; }
.pen { display: inline-block; vertical-align: -5px; margin-left: 6px; color: #63666f; }
.cpbtns { display: flex; gap: 12px; margin-top: 11px; }
.cpbtns button { display: flex; align-items: center; gap: 7px; height: 42px; padding: 0 11px; border: 2px solid #283a35; border-radius: 6px; font-size: 19px; }
.cpbtns .i { width: 18px; height: 18px; }
.thumb { display: grid; place-items: center; flex: none; width: 148px; height: 107px; margin-top: 29px; border-radius: 6px; background: linear-gradient(150deg, #f0f3fc, #e2effa 60%, #effbf9); }
.thumb i { width: 10px; height: 10px; border: 1px solid #4a72d8; border-bottom-color: transparent; border-radius: 50%; }
.worked { display: flex; align-items: center; gap: 12px; height: 54px; padding: 0 12px 0 17px; border: 2px solid #22252e; border-radius: 12px; font-size: 20px; color: #c5c8ce; }
.worked span { flex: 1; }
.prose { display: flex; flex-direction: column; gap: 22px; padding: 16px 6px 6px; }
.prompt { flex: none; height: 112px; margin: 0 12px 12px; padding: 10px 8px 8px; border: 2px solid #2b6de0; border-radius: 8px; background: #22252e; }
.promptline { display: flex; align-items: center; height: 34px; padding-left: 6px; }
.promptline textarea { field-sizing: content; max-width: 96%; height: 30px; line-height: 30px; white-space: pre; overflow: hidden; }
.promptline i { width: 1px; height: 28px; background: #fff; }
.prompttools { display: flex; align-items: center; height: 36px; margin-top: 20px; padding-left: 2px; color: #b5b8be; }
.edit { display: flex; align-items: center; gap: 6px; margin: 0 18px 0 19px; font-size: 20px; }
.tchip { display: flex; align-items: center; gap: 13px; width: 72px; height: 36px; margin-left: 6px; padding-left: 9px; border-radius: 6px; background: #2a2d37; }
.edit + .i + .tchip { margin-left: 11px; }
.tchip .s { width: 16px; height: 16px; }
.send { display: grid; place-items: center; width: 36px; height: 36px; margin-left: auto; border-radius: 6px; background: #1f4f9e; color: #e8f0ff; }

/* Preview pane */
.preview { flex: 1; min-width: 0; margin-left: 11px; }
.pv { width: 155px; padding-left: 9px; } .dep { width: 203px; padding-left: 10px; } .gt { width: 112px; padding-left: 10px; } .con { width: 158px; padding-left: 10px; }
.preview .ptab { font-size: 20px; } .preview .ptab .i { width: 23px; height: 23px; }
.dep .i, .gt .i { color: #52875a; } .con .i { color: #7a6d44; }
.pvbar { display: flex; align-items: center; flex: none; height: 54px; padding: 0 12px; border-bottom: 2px solid #262933; color: #a5a9b0; }
.pvbar > .s { width: 20px; height: 20px; margin-right: 23px; }
.pvbar > .s + .i:not(.s) { color: #e6e7ea; }
.pvurl { display: flex; align-items: center; flex: 1; gap: 4px; height: 36px; margin: 0 12px 0 10px; padding: 0 10px 0 6px; border-radius: 6px; background: #22252e; color: #e6e7ea; }
.pvurl span { flex: 1; } .pvurl b { font-weight: 400; color: #7fd184; } .pvurl .i { width: 18px; height: 18px; color: #7fd184; } .pvurl .go { width: 16px; height: 16px; color: #a5a9b0; }
.tool { position: relative; margin: 0 16px 0 14px; }
.tool b { position: absolute; right: -8px; top: -11px; width: 20px; height: 20px; border-radius: 50%; background: #f26d64; color: #2a1412; font-size: 17px; font-weight: 400; line-height: 20px; text-align: center; }

/* Mundo Tango site */
.webview { position: relative; display: flex; flex: 1; min-height: 0; background: #f9fafc; font-family: var(--ui); color: #1f2937; }
.webview .i { stroke-width: 2; stroke-linecap: round; }
.side { flex: none; width: 374px; overflow: hidden; background: #fff; }
.brand { display: flex; align-items: center; gap: 18px; height: 96px; padding-left: 24px; background: linear-gradient(90deg, #4f9691, #4e80ee); color: #fff; font-size: 30px; font-weight: 700; }
.brand b { display: grid; place-items: center; width: 48px; height: 48px; border-radius: 12px; background: #fff; color: #4f9691; font-size: 21px; }
.sidebody { padding: 24px; }
.me { display: flex; align-items: flex-start; gap: 18px; height: 138px; padding: 24px; border-radius: 16px; background: #f9fafb; }
.avatar { display: grid; place-items: center; width: 72px; height: 72px; border-radius: 50%; background: linear-gradient(135deg, #dd79ae, #779ff3); box-shadow: 0 0 0 3px #fff; color: #fff; font-size: 27px; font-weight: 600; }
.me div { padding-top: 10px; }
.side strong { display: block; font-size: 21px; line-height: 28px; font-weight: 600; color: #111827; }
.side small { display: block; font-size: 18px; line-height: 24px; color: #4b5563; }
.side h2 { margin-top: 37px; font-size: 18px; line-height: 24px; font-weight: 500; color: #6b7280; }
.comm { display: flex; align-items: center; height: 48px; margin: 34px 12px 0; }
.noimg { width: 48px; height: 48px; margin-right: 12px; overflow: hidden; font-size: 21px; line-height: 32px; } .noimg svg { width: 24px; height: 26px; }
.comm strong { font-weight: 500; line-height: 26px; color: #1f2937; } .comm small { color: #6b7280; }
.comm .i { margin-left: auto; color: #6b7280; }
.side .menuhead { margin-top: 50px; }
.menu { display: flex; flex-direction: column; margin: 14px 0 -3px; }
.menu a { display: flex; align-items: center; gap: 18px; height: 60px; padding-left: 24px; font-size: 21px; font-weight: 600; color: #374151; }
.menu .i { width: 30px; height: 30px; color: #6b7280; }
.stats { display: flex; flex-direction: column; gap: 12px; margin-top: 17px; }
.stats div { display: flex; align-items: flex-start; gap: 19px; flex: none; height: 96px; padding: 12px 0 0 24px; border-radius: 16px; background: #f2f3f5; }
.stats i { display: grid; place-items: center; width: 48px; height: 48px; margin-top: 12px; border-radius: 12px; background: linear-gradient(135deg, #d8539a, #5180ec); color: #fff; }
.stats p { font-size: 21px; line-height: 32px; font-weight: 500; color: #111827; } .stats b { display: block; font-size: 27px; line-height: 40px; color: #374151; }
.sbar { flex: none; width: 9px; background: linear-gradient(#7d2232, #7d2232) top / 100% 1272px no-repeat #f4f4f4; border-radius: 4px 4px 0 0; }
.sbar.page { background-size: 100% 163px; background-color: #f5f6f3; width: 8px; }
.site { display: flex; flex-direction: column; flex: 1; min-width: 0; overflow: hidden; }
.sitebar { position: relative; display: flex; align-items: center; justify-content: space-between; flex: none; height: 97px; padding: 0 60px 0 18px; background: #fff; border-bottom: 1px solid #e5e7eb; box-shadow: 0 2px 6px rgba(0,0,0,.08); color: #374151; }
.sitesearch { display: flex; align-items: center; width: 316px; height: 60px; padding: 0 23px 0 16px; border: 1px solid #d1d5db; border-radius: 9px; font-size: 21px; }
.sitesearch .i { color: #9ca3af; } .sitesearch input { flex: 1; min-width: 0; margin-left: 20px; } .sitesearch input::placeholder { color: #757575; }
.siteicons { display: flex; align-items: center; gap: 54px; } .siteicons > .i { width: 24px; height: 24px; }
.lang { display: flex; align-items: center; gap: 7px; margin-right: 2px; font-size: 21px; } .lang > svg:first-child { width: 21px; height: 15px; }
.siteicons .chev { width: 20px; height: 20px; color: #4b5563; } .lang .chev { margin-left: 12px; }
.usr { display: flex; align-items: center; gap: 14px; margin-left: -6px; }
.usr b { display: grid; place-items: center; width: 48px; height: 48px; border-radius: 50%; background: linear-gradient(90deg, #d0559c, #4e80ee); color: #fff; font-size: 21px; font-weight: 500; }
.canvas {
  flex: 1; min-height: 0; margin-left: 241px; padding: 34px 47px 0 48px; overflow: hidden;
  background: radial-gradient(circle at 26% 48%, rgba(190,236,236,.55), transparent 36%), radial-gradient(circle at 92% 40%, rgba(226,232,252,.7), transparent 40%), radial-gradient(circle at 60% 80%, rgba(190,215,250,.7), transparent 40%), linear-gradient(120deg, #f0fdfa, #f0f9fb 45%, #eef3fd);
}
.hero { display: flex; align-items: center; height: 96px; }
.herobox { display: grid; place-items: center; width: 60px; height: 60px; border-radius: 18px; background: linear-gradient(90deg, #4f9694, #4e80ee); color: #a9c8e6; } .herobox .i { width: 36px; height: 36px; }
.hero h1 { margin: 0 20px 0 17px; font: 700 84px/96px var(--serif); background: linear-gradient(90deg, #5bada6, #4eb0d2 45%, #4e80ee); -webkit-background-clip: text; background-clip: text; color: transparent; }
.hh { width: 30px; height: 30px; margin-bottom: 14px; color: #5fcdea; }
.lead { margin-top: 21px; font-size: 28px; line-height: 42px; color: #111; }
.cols { display: flex; align-items: flex-start; gap: 48px; margin-top: 59px; }
.post {
  display: flex; flex-direction: column; flex: 1; min-width: 0; height: 1300px; padding: 48px; border: 1px solid #fff; border-radius: 12px; box-shadow: 0 0 40px rgba(90,140,190,.2);
  background: radial-gradient(circle at 75% 72%, #cbdffa, transparent 40%), radial-gradient(circle at 38% 30%, #c2ebe9, transparent 50%), linear-gradient(90deg, #dbf0f4, #d4e6f7);
}
.poster { display: flex; gap: 24px; height: 84px; }
.pava { position: relative; display: grid; place-items: center; width: 84px; height: 84px; border-radius: 50%; background: linear-gradient(135deg, #5bb0a8, #3f64dc); box-shadow: 0 4px 24px rgba(60,110,190,.45); color: #fff; font-size: 27px; font-weight: 700; }
.pava i { position: absolute; right: -6px; bottom: -8px; width: 30px; height: 30px; border: 3px solid #cfe3ea; border-radius: 50%; background: #87cfa4; }
.poster h3 { margin-top: 2px; font: 700 24px/38px var(--serif); color: #111827; }
.poster p { font-size: 21px; line-height: 36px; color: #6b7280; }
.moment { flex: none; height: 180px; margin-top: 36px; padding: 34px 30px; border: 1px solid #e8ebee; border-radius: 24px; background: #fdfefe; box-shadow: inset 0 3px 6px rgba(0,0,0,.05), 0 1px 3px rgba(0,0,0,.06); font-size: 26px; line-height: 36px; }
.moment::placeholder, .loc input::placeholder { color: #9ca3af; }
.rec { display: flex; align-items: center; flex: none; height: 120px; margin-top: 39px; padding: 0 26px; border: 1px solid #e3eaef; border-radius: 24px; background: rgba(255,255,255,.72); text-align: left; box-shadow: 0 1px 3px rgba(0,0,0,.06); }
.recic { display: grid; place-items: center; width: 54px; height: 54px; margin-right: 18px; border-radius: 14px; background: #f3f4f6; color: #6b7280; } .recic .i { width: 30px; height: 30px; }
.rectx { flex: 1; } .rectx b { display: block; font-size: 24px; line-height: 40px; font-weight: 600; color: #374151; } .rectx small { display: block; font-size: 18px; line-height: 34px; color: #6b7280; }
.loc { display: flex; align-items: center; gap: 13px; height: 62px; margin-top: 31px; }
.loc label { display: flex; align-items: center; flex: 1; height: 62px; padding-left: 18px; border-radius: 10px; border: 1px solid rgba(255,255,255,.6); background: rgba(255,255,255,.66); font-size: 24px; } .loc label .i { color: #eef3f5; } .loc input { flex: 1; margin-left: 18px; }
.loc button { display: grid; place-items: center; width: 60px; height: 52px; border: 1px solid #e5e7eb; border-radius: 8px; background: #fff; color: #111; }
.post h4 { display: flex; align-items: center; gap: 12px; margin: 31px 0 19px; font-size: 21px; line-height: 30px; font-weight: 600; color: #374151; } .post h4 .i { color: #4f9691; }
.tags { display: flex; flex-wrap: wrap; gap: 10px 20px; }
.tags span { width: 100%; height: 0; }
.tags button { display: flex; align-items: center; gap: 11px; height: 72px; padding: 0 30px; border: 1px solid #e6edf1; border-radius: 24px; background: rgba(255,255,255,.86); box-shadow: 0 1px 3px rgba(0,0,0,.06); font-size: 21px; font-weight: 600; color: #374151; }
.tags em { font-size: 22px; }
.adv { display: flex; align-items: center; gap: 4px; margin-top: 31px; font-size: 21px; line-height: 30px; color: #6b7280; } .adv .i { width: 18px; height: 18px; }
.post hr { margin-top: 47px; border: 0; border-top: 1px solid #eef3fa; }
.events { flex: none; width: 576px; height: 1300px; padding: 36px 37px; border-radius: 36px; background: linear-gradient(#fcfdfe, #f8f9fd); box-shadow: 0 10px 60px rgba(100,140,190,.25); }
.evhead { display: flex; align-items: center; height: 76px; margin-bottom: 27px; }
.evbox { display: grid; place-items: center; width: 66px; height: 66px; margin-right: 18px; border-radius: 18px; background: linear-gradient(135deg, #5bb0a8, #4e80ee); box-shadow: 0 6px 14px rgba(60,90,140,.25); color: #fff; } .evbox .i { width: 30px; height: 30px; }
.evhead div { flex: 1; } .evhead h2 { width: max-content; font: 700 33px/44px var(--serif); background: linear-gradient(90deg, #43807f, #3b66dc); -webkit-background-clip: text; background-clip: text; color: transparent; white-space: nowrap; }
.evhead p { font-size: 21px; line-height: 36px; color: #4b5563; }
.evhead button { display: grid; place-items: center; width: 54px; height: 54px; border-radius: 16px; background: #cdf6f2; color: #3f7d7b; } .evhead button .i { width: 30px; height: 30px; }
.ev { height: 309px; margin-bottom: 18px; padding: 25px; border-radius: 20px; background: #fff; box-shadow: 0 6px 36px rgba(80,80,160,.16); color: #5b80ea; font-size: 21px; }
.evtag { display: flex; align-items: center; gap: 6px; height: 30px; } .evtag b { padding: 0 13px; border-radius: 15px; font-size: 18px; line-height: 30px; font-weight: 600; } .evtag i { width: 18px; height: 6px; border-radius: 3px; background: #f3f4f6; }
.milonga b { color: #dc6228; } .milonga .evtag b { background: #fdf6ef; } .festival .evtag b { background: #fbf0f6; color: #d03a78; } .marathon .evtag b { background: #eff5fe; color: #3f64e8; }
.ev h3 { margin: 11px 0 6px; font: 700 22px/38px var(--serif); color: #263c8c; white-space: nowrap; }
.ev p { display: flex; align-items: center; gap: 12px; height: 42px; } .ev p .i { width: 24px; height: 24px; }
.org { display: flex; align-items: center; gap: 12px; height: 42px; margin-top: 6px; padding-top: 12px; border-top: 1px solid #eaf0fb; color: #6f90ee; } .ev .org b { display: grid; place-items: center; width: 30px; height: 30px; border-radius: 50%; background: #f6d3d3; color: #dc6228; font-size: 17px; font-weight: 600; }
.fab { position: absolute; right: 31px; bottom: 25px; display: grid; place-items: center; width: 73px; height: 73px; border: 1px solid #e5e7eb; border-radius: 50%; background: #fff; box-shadow: 0 6px 16px rgba(0,0,0,.15); color: #4b5563; } .fab .i { width: 36px; height: 36px; }
```
